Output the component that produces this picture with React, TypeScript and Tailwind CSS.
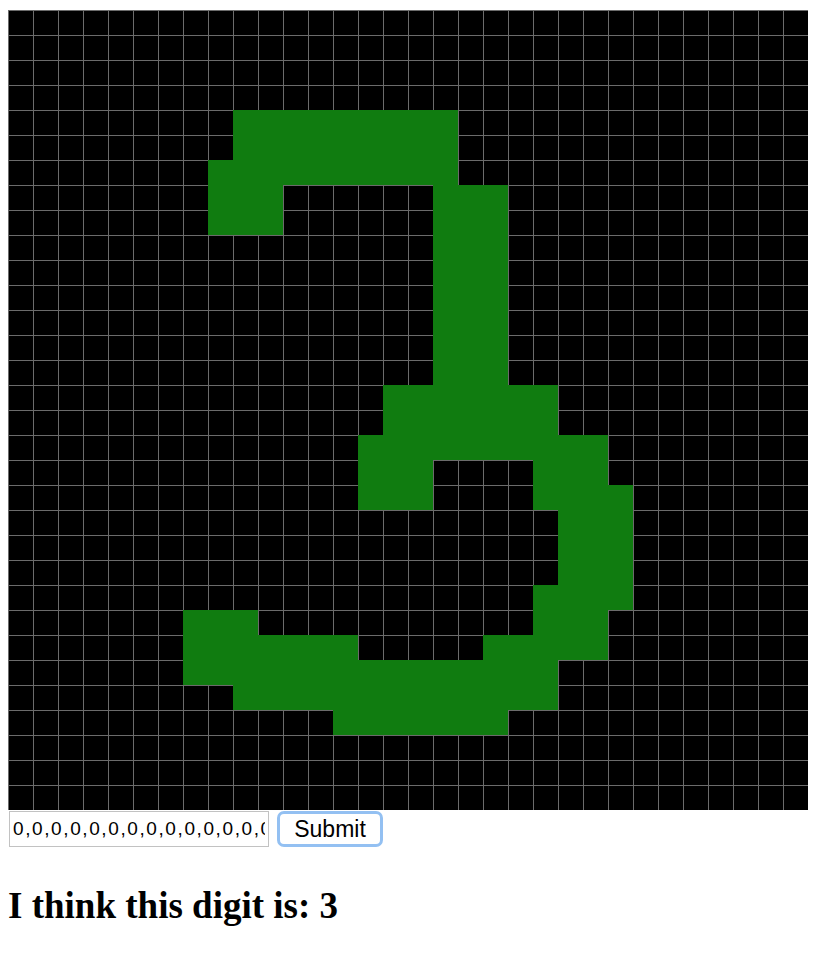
import React from 'react';

// green pixel runs per row: [row, fromCol, toCol]
const runs: [number, number, number][] = [
  [4, 9, 17],
  [5, 9, 17],
  [6, 8, 17],
  [7, 8, 10], [7, 17, 19],
  [8, 8, 10], [8, 17, 19],
  [9, 17, 19], [10, 17, 19], [11, 17, 19], [12, 17, 19], [13, 17, 19], [14, 17, 19],
  [15, 15, 21],
  [16, 15, 21],
  [17, 14, 23],
  [18, 14, 16], [18, 21, 23],
  [19, 14, 16], [19, 21, 24],
  [20, 22, 24], [21, 22, 24], [22, 22, 24],
  [23, 21, 24],
  [24, 7, 9], [24, 21, 23],
  [25, 7, 13], [25, 19, 23],
  [26, 7, 21],
  [27, 9, 21],
  [28, 13, 19],
];

const SIZE = 32;

const pixels: number[] = Array.from({ length: SIZE * SIZE }, (_, i) => {
  const r = Math.floor(i / SIZE);
  const c = i % SIZE;
  return runs.some(([row, a, b]) => row === r && c >= a && c <= b) ? 1 : 0;
});

const Cell = ({ on }: { on: boolean }) =>
  on ? (
    <div className="w-[25px] h-[25px] bg-[#107c10]" />
  ) : (
    <div className="w-[25px] h-[25px] bg-black border-l border-t border-[#6b6b6b]" />
  );

export default function App() {
  return (
    <div className="bg-white min-h-[968px] pl-[8px] pt-[10px]">
      <div className="grid grid-cols-[repeat(32,25px)] w-[800px] h-[800px]">
        {pixels.map((p, i) => (
          <Cell key={i} on={p === 1} />
        ))}
      </div>

      <div className="flex items-center mt-[1px]">
        <input
          readOnly
          value={pixels.join(',')}
          className="ml-[1px] w-[260px] h-[36px] border border-[#c2c2c2] px-[3px] text-[19px] tracking-[1.6px] text-black outline-none"
          style={{ fontFamily: '"Liberation Sans", Arial, sans-serif' }}
        />
        <button
          className="ml-[8px] w-[106px] h-[36px] rounded-[7px] border-[3px] border-[#93c0f2] bg-white text-[23px] text-black leading-none"
          style={{ fontFamily: '"Liberation Sans", Arial, sans-serif' }}
        >
          Submit
        </button>
      </div>

      <h2
        className="mt-[40px] text-[37px] font-bold text-black leading-none"
        style={{ fontFamily: '"Liberation Serif", "Times New Roman", serif' }}
      >
        I think this digit is: 3
      </h2>
    </div>
  );
}
